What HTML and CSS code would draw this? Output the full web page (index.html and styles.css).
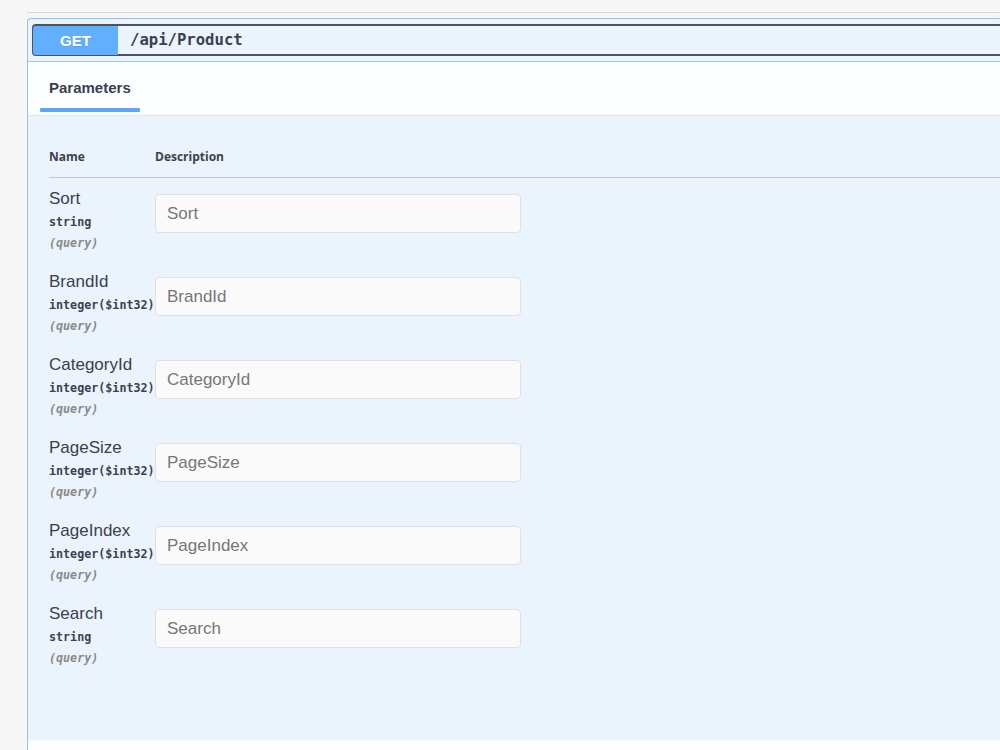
FILE: index.html
```html
<!DOCTYPE html>
<html>
<head>
<meta charset="utf-8">
<link rel="stylesheet" href="styles.css">
</head>
<body>
<div class="page">
  <div class="tag-line"></div>
  <div class="opblock">
    <div class="summary">
      <div class="summary-control">
        <span class="method">GET</span>
        <span class="path">/api/Product</span>
      </div>
    </div>
    <div class="section-header">
      <div class="tab-item">
        <span class="tab-title">Parameters</span>
        <span class="tab-underline"></span>
      </div>
    </div>
    <div class="params">
      <div class="params-head">
        <div class="col-name">Name</div>
        <div class="col-desc">Description</div>
      </div>
      <div class="param-row">
        <div class="col-name">
          <div class="p-name">Sort</div>
          <div class="p-type">string</div>
          <div class="p-in">(query)</div>
        </div>
        <div class="col-desc"><input class="p-input" type="text" placeholder="Sort"></div>
      </div>
      <div class="param-row">
        <div class="col-name">
          <div class="p-name">BrandId</div>
          <div class="p-type">integer<span class="p-format">($int32)</span></div>
          <div class="p-in">(query)</div>
        </div>
        <div class="col-desc"><input class="p-input" type="text" placeholder="BrandId"></div>
      </div>
      <div class="param-row">
        <div class="col-name">
          <div class="p-name">CategoryId</div>
          <div class="p-type">integer<span class="p-format">($int32)</span></div>
          <div class="p-in">(query)</div>
        </div>
        <div class="col-desc"><input class="p-input" type="text" placeholder="CategoryId"></div>
      </div>
      <div class="param-row">
        <div class="col-name">
          <div class="p-name">PageSize</div>
          <div class="p-type">integer<span class="p-format">($int32)</span></div>
          <div class="p-in">(query)</div>
        </div>
        <div class="col-desc"><input class="p-input" type="text" placeholder="PageSize"></div>
      </div>
      <div class="param-row">
        <div class="col-name">
          <div class="p-name">PageIndex</div>
          <div class="p-type">integer<span class="p-format">($int32)</span></div>
          <div class="p-in">(query)</div>
        </div>
        <div class="col-desc"><input class="p-input" type="text" placeholder="PageIndex"></div>
      </div>
      <div class="param-row">
        <div class="col-name">
          <div class="p-name">Search</div>
          <div class="p-type">string</div>
          <div class="p-in">(query)</div>
        </div>
        <div class="col-desc"><input class="p-input" type="text" placeholder="Search"></div>
      </div>
    </div>
    <div class="responses-header"></div>
  </div>
</div>
</body>
</html>
```

FILE: styles.css
```css
html, body {
  margin: 0;
  padding: 0;
  background: #f7f7f7;
  overflow: hidden;
  height: 750px;
}

.page {
  padding: 12px 0 0 27px;
  font-family: "Liberation Sans", Arial, sans-serif;
  color: #3b4151;
}

.tag-line {
  height: 0;
  border-top: 1px solid #d6d7da;
  margin-bottom: 5px;
}

.opblock {
  background: #ebf3fc;
  border: 1px solid #8fc3f6;
  border-right: none;
  border-bottom: none;
  border-radius: 4px 0 0 0;
}

.summary {
  padding: 5px 0 5px 4px;
  border-bottom: 1px solid #9ccbf8;
}

.summary-control {
  display: flex;
  align-items: center;
  height: 28px;
  border: 2px solid #4e535e;
  border-right: none;
  border-radius: 4px 0 0 4px;
}

.method {
  width: 85px;
  height: 29px;
  margin-left: -1px;
  display: flex;
  align-items: center;
  justify-content: center;
  background: #61affe;
  color: #fff;
  font-weight: 700;
  font-size: 15px;
  border-radius: 3px 0 0 3px;
  text-shadow: 0 1px 0 rgba(0,0,0,.1);
}

.path {
  margin-left: 12px;
  font-family: "DejaVu Sans Mono", monospace;
  font-weight: 700;
  font-size: 15.6px;
  color: #3b4151;
}

.section-header {
  height: 53px;
  background: #fbfdff;
  border-bottom: 1px solid #dfe5ec;
  display: flex;
  padding-left: 12px;
}

.tab-item {
  display: flex;
  flex-direction: column;
  padding-top: 17px;
}

.tab-title {
  padding: 0 9px;
  font-weight: 700;
  font-size: 15px;
  line-height: 18px;
  color: #3b4151;
}

.tab-underline {
  display: block;
  margin-top: 11px;
  height: 4px;
  background: #5ea6f6;
  border-radius: 1px;
}

.params {
  padding: 33px 0 64px 21px;
}

.params-head {
  display: flex;
  font-family: "Open Sans", sans-serif;
  font-weight: 700;
  font-size: 12px;
  line-height: 16px;
  padding-bottom: 12px;
  border-bottom: 1px solid #c3c8cf;
}

.col-name {
  width: 106px;
  flex: none;
}

.col-desc {
  flex: 1;
}

.param-row {
  display: flex;
  height: 83px;
  box-sizing: border-box;
  padding-top: 12px;
}

.param-row .col-desc {
  padding-top: 4px;
}

.p-name {
  font-size: 17px;
  line-height: 18px;
  color: #3b4151;
}

.p-type {
  margin-top: 4px;
  font-family: "DejaVu Sans Mono", monospace;
  font-weight: 700;
  font-size: 11.7px;
  line-height: 21px;
  color: #3b4151;
  white-space: nowrap;
}

.p-format {
  color: #3b4151;
}

.p-in {
  font-family: "DejaVu Sans Mono", monospace;
  font-style: italic;
  font-weight: 700;
  font-size: 11.7px;
  line-height: 21px;
  color: #8a8a8a;
}

.p-input {
  display: block;
  width: 366px;
  height: 39px;
  box-sizing: border-box;
  padding: 0 11px;
  margin: 0;
  background: #fafafa;
  border: 1px solid #dde1e5;
  border-radius: 4px;
  font-family: "Liberation Sans", Arial, sans-serif;
  font-size: 17px;
  color: #3b4151;
  outline: none;
}

.p-input::placeholder {
  color: #777;
}

.responses-header {
  height: 10px;
  background: #fcfdfe;
}
```
